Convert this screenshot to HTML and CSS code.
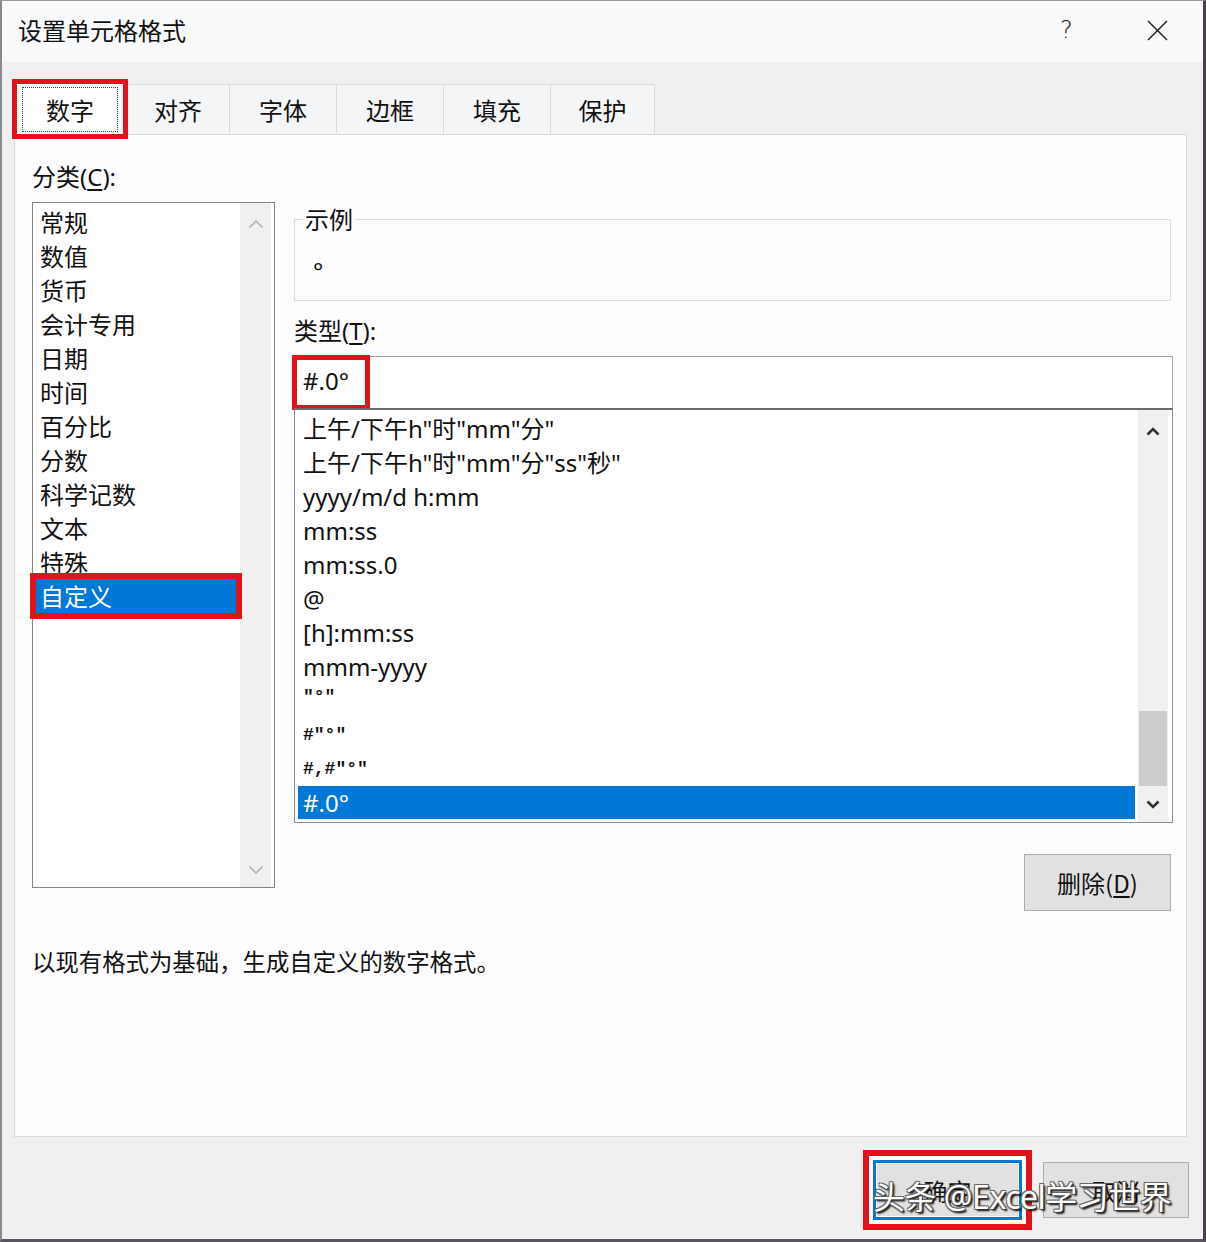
FILE: index.html
```html
<!DOCTYPE html>
<html lang="zh-CN">
<head>
<meta charset="utf-8">
<title>设置单元格格式</title>
<link rel="stylesheet" href="styles.css">
</head>
<body>
<div class="window">
  <div class="titlebar">
    <span class="title">设置单元格格式</span>
    <span class="help">?</span>
    <span class="close"><svg width="21" height="21" viewBox="0 0 21 21"><path d="M1 1 L20 20 M20 1 L1 20" stroke="#222" stroke-width="1.5" fill="none"/></svg></span>
  </div>
  <div class="main">
    <div class="tabs">
      <div class="tab active"><span class="focus">数字</span></div>
      <div class="tab t2">对齐</div>
      <div class="tab">字体</div>
      <div class="tab">边框</div>
      <div class="tab">填充</div>
      <div class="tab t6">保护</div>
    </div>
    <div class="panel">
      <div class="columns">
        <div class="col-left">
          <div class="label">分类(<u>C</u>):</div>
          <div class="listbox cat-list">
            <div class="items">
              <div class="item">常规</div>
              <div class="item">数值</div>
              <div class="item">货币</div>
              <div class="item">会计专用</div>
              <div class="item">日期</div>
              <div class="item">时间</div>
              <div class="item">百分比</div>
              <div class="item">分数</div>
              <div class="item">科学记数</div>
              <div class="item">文本</div>
              <div class="item">特殊</div>
              <div class="item selected">自定义</div>
            </div>
            <div class="vscroll">
              <div class="arrow up"><svg width="16" height="10" viewBox="0 0 16 10"><path d="M1.5 8.5 L8 2 L14.5 8.5" stroke="#b4b4b4" stroke-width="1.6" fill="none"/></svg></div>
              <div class="arrow down"><svg width="16" height="10" viewBox="0 0 16 10"><path d="M1.5 1.5 L8 8 L14.5 1.5" stroke="#b4b4b4" stroke-width="1.6" fill="none"/></svg></div>
            </div>
          </div>
        </div>
        <div class="col-right">
          <fieldset class="sample">
            <legend>示例</legend>
            <div class="sample-value">°</div>
          </fieldset>
          <div class="label type-label">类型(<u>T</u>):</div>
          <div class="type-input"><span class="mark">#.0°</span></div>
          <div class="listbox fmt-list">
            <div class="items">
              <div class="item">上午/下午h"时"mm"分"</div>
              <div class="item">上午/下午h"时"mm"分"ss"秒"</div>
              <div class="item">yyyy/m/d h:mm</div>
              <div class="item">mm:ss</div>
              <div class="item">mm:ss.0</div>
              <div class="item">@</div>
              <div class="item">[h]:mm:ss</div>
              <div class="item">mmm-yyyy</div>
              <div class="item sym high">"°"</div>
              <div class="item sym">#"°"</div>
              <div class="item sym">#,#"°"</div>
              <div class="item selected">#.0°</div>
            </div>
            <div class="vscroll">
              <div class="arrow up"><svg width="14" height="9" viewBox="0 0 14 9"><path d="M1.5 7.5 L7 2 L12.5 7.5" stroke="#333" stroke-width="2.6" fill="none"/></svg></div>
              <div class="thumb"></div>
              <div class="arrow down"><svg width="14" height="9" viewBox="0 0 14 9"><path d="M1.5 1.5 L7 7 L12.5 1.5" stroke="#333" stroke-width="2.6" fill="none"/></svg></div>
            </div>
          </div>
          <button class="btn delete">删除(<u>D</u>)</button>
        </div>
      </div>
      <p class="desc">以现有格式为基础，生成自定义的数字格式。</p>
    </div>
    <div class="footer">
      <button class="btn ok">确定</button>
      <button class="btn cancel">取消</button>
      <div class="watermark">头条 @Excel学习世界</div>
    </div>
  </div>
</div>
</body>
</html>
```

FILE: styles.css
```css
* { box-sizing: border-box; }
html, body { margin: 0; padding: 0; }
body {
  width: 1206px;
  height: 1242px;
  overflow: hidden;
  font-family: "Noto Sans", "Noto Sans CJK SC", sans-serif;
  color: #111;
  background: #fff;
}
.window {
  width: 1206px;
  height: 1242px;
  display: flex;
  flex-direction: column;
  background: #f0f0f0;
  border-top: 1px solid #9a9a9a;
  border-left: 2px solid #8a8a8a;
  border-right: 3px solid #4a4048;
  border-bottom: 3px solid #5a5560;
}
.titlebar {
  height: 61px;
  flex: none;
  display: flex;
  align-items: center;
  padding: 0 35px 3px 16px;
  background: #f9fafb;
}
.title {
  font-family: "Noto Sans CJK SC", sans-serif;
  font-size: 24px;
  line-height: 30px;
}
.help {
  margin-left: auto;
  margin-right: 75px;
  font-family: "DejaVu Sans", sans-serif;
  font-weight: 200;
  font-size: 24px;
  width: 12px;
  line-height: 30px;
}
.close { display: flex; }

.main {
  flex: 1;
  display: flex;
  flex-direction: column;
  padding: 22px 16px 0 12px;
}
.tabs {
  display: flex;
  height: 50px;
  flex: none;
}
.tab {
  width: 108px;
  height: 50px;
  margin-left: -1px;
  display: flex;
  align-items: center;
  justify-content: center;
  border: 1px solid #d9d9d9;
  border-bottom: none;
  background: #f4f5f7;
  font-family: "Noto Sans CJK SC", sans-serif;
  font-size: 24px;
}
.tab.t2 { width: 104px; }
.tab.t6 { width: 105px; }
.tab.active {
  width: 106px;
  margin: 0 4px 0 3px;
  background: #fff;
  border-color: #fff;
  outline: 5px solid #e0121b;
  position: relative;
  z-index: 2;
}
.focus {
  width: 96px;
  height: 45px;
  display: flex;
  align-items: center;
  justify-content: center;
  border: 1px dotted #3a3a50;
}

.panel {
  height: 1003px;
  flex: none;
  border: 1px solid #d9d9d9;
  background: #fdfdfe;
  padding: 27px 13px 0 17px;
  display: flex;
  flex-direction: column;
}
.columns {
  display: grid;
  grid-template-columns: 243px 879px;
  column-gap: 19px;
  align-items: start;
}
.label {
  font-size: 24px;
  line-height: 30px;
}
.label u { text-underline-offset: 3px; }
.col-left { display: flex; flex-direction: column; }
.col-left .label { margin-bottom: 10px; }
.col-right { display: flex; flex-direction: column; }

.listbox { display: flex; background: #fff; }
.cat-list { height: 686px; border: 1px solid #848484; }
.fmt-list {
  height: 415px;
  border: 1px solid #8c8a96;
  border-top: 2px solid #6a6a6a;
}
.items { flex: 1; display: flex; flex-direction: column; padding-top: 2px; }
.item {
  height: 34px;
  line-height: 34px;
  font-size: 24px;
  white-space: nowrap;
}
.cat-list .item {
  font-family: "Noto Sans CJK SC", sans-serif;
  padding-left: 4px;
  margin: 0 4px 0 3px;
}
.fmt-list .item { padding-left: 5px; margin: 0 3px; }
.item.selected { background: #0078d7; color: #fff; }
.cat-list .item.selected { outline: 6px solid #e0121b; position: relative; z-index: 1; }
.fmt-list .item.selected { height: 33px; line-height: 33px; }
.item.sym {
  font-family: "Liberation Mono", monospace;
  font-weight: bold;
  font-size: 18px;
}
.item.high { line-height: 26px; }

.vscroll {
  width: 31px;
  margin-right: 3px;
  background: #f0f0f0;
  display: flex;
  flex-direction: column;
}
.fmt-list .vscroll { width: 30px; margin-right: 4px; }
.arrow { display: flex; align-items: center; justify-content: center; flex: none; }
.arrow.up { height: 42px; }
.cat-list .arrow.down { height: 34px; margin-top: auto; }
.fmt-list .arrow.down { height: 36px; }
.thumb {
  margin: auto 1px 0 1px;
  height: 75px;
  background: #cdcdcd;
}

.sample {
  margin: 42px 2px 0 0;
  padding: 0 18px;
  border: 1px solid #dcdcdc;
  min-width: 0;
}
.sample legend {
  padding: 0 2px;
  margin-left: -10px;
  font-family: "Noto Sans CJK SC", sans-serif;
  font-size: 24px;
  line-height: 30px;
}
.sample-value {
  height: 66px;
  padding-top: 22px;
  font-size: 24px;
  line-height: 30px;
}
.type-label { margin: 15px 0 10px; }
.type-input {
  height: 52px;
  border: 1px solid #a8a8a8;
  border-bottom: none;
  background: #fff;
  display: flex;
  align-items: center;
  padding-left: 2px;
}
.mark {
  display: inline-block;
  height: 45px;
  line-height: 41px;
  padding: 0 16px 0 6px;
  outline: 5px solid #e0121b;
  font-size: 24px;
}

.btn {
  font-family: "Noto Sans CJK SC", sans-serif;
  font-size: 24px;
  color: #111;
  background: #e1e1e1;
  border: 1px solid #adadad;
  padding: 0;
  display: flex;
  align-items: center;
  justify-content: center;
}
.btn u { text-underline-offset: 3px; }
.delete {
  align-self: flex-end;
  margin: 31px 2px 0 0;
  width: 147px;
  height: 57px;
}
.desc {
  margin: 35px 0 0;
  font-family: "Noto Sans CJK SC", sans-serif;
  font-size: 23.4px;
  line-height: 30px;
}

.footer {
  flex: 1;
  position: relative;
  display: flex;
  justify-content: flex-end;
  align-items: flex-start;
  padding-top: 23px;
}
.ok {
  width: 149px;
  height: 60px;
  border: 3px solid #0078d7;
  box-shadow: inset 0 0 0 1px #fff, 0 0 0 4px #fff, 0 0 0 10px #e0121b;
}
.cancel {
  width: 146px;
  height: 56px;
  margin: 2px -2px 0 21px;
}
.watermark {
  position: absolute;
  left: 859px;
  top: 40px;
  font-family: "Noto Sans", "Noto Sans CJK SC", sans-serif;
  font-size: 32px;
  line-height: 40px;
  letter-spacing: -0.5px;
  white-space: nowrap;
  color: #fff;
  text-shadow: 1px 1px 0 #333, -1px -1px 0 #666, 1px -1px 0 #666, -1px 1px 0 #666, 2px 2px 2px #000;
}
```
